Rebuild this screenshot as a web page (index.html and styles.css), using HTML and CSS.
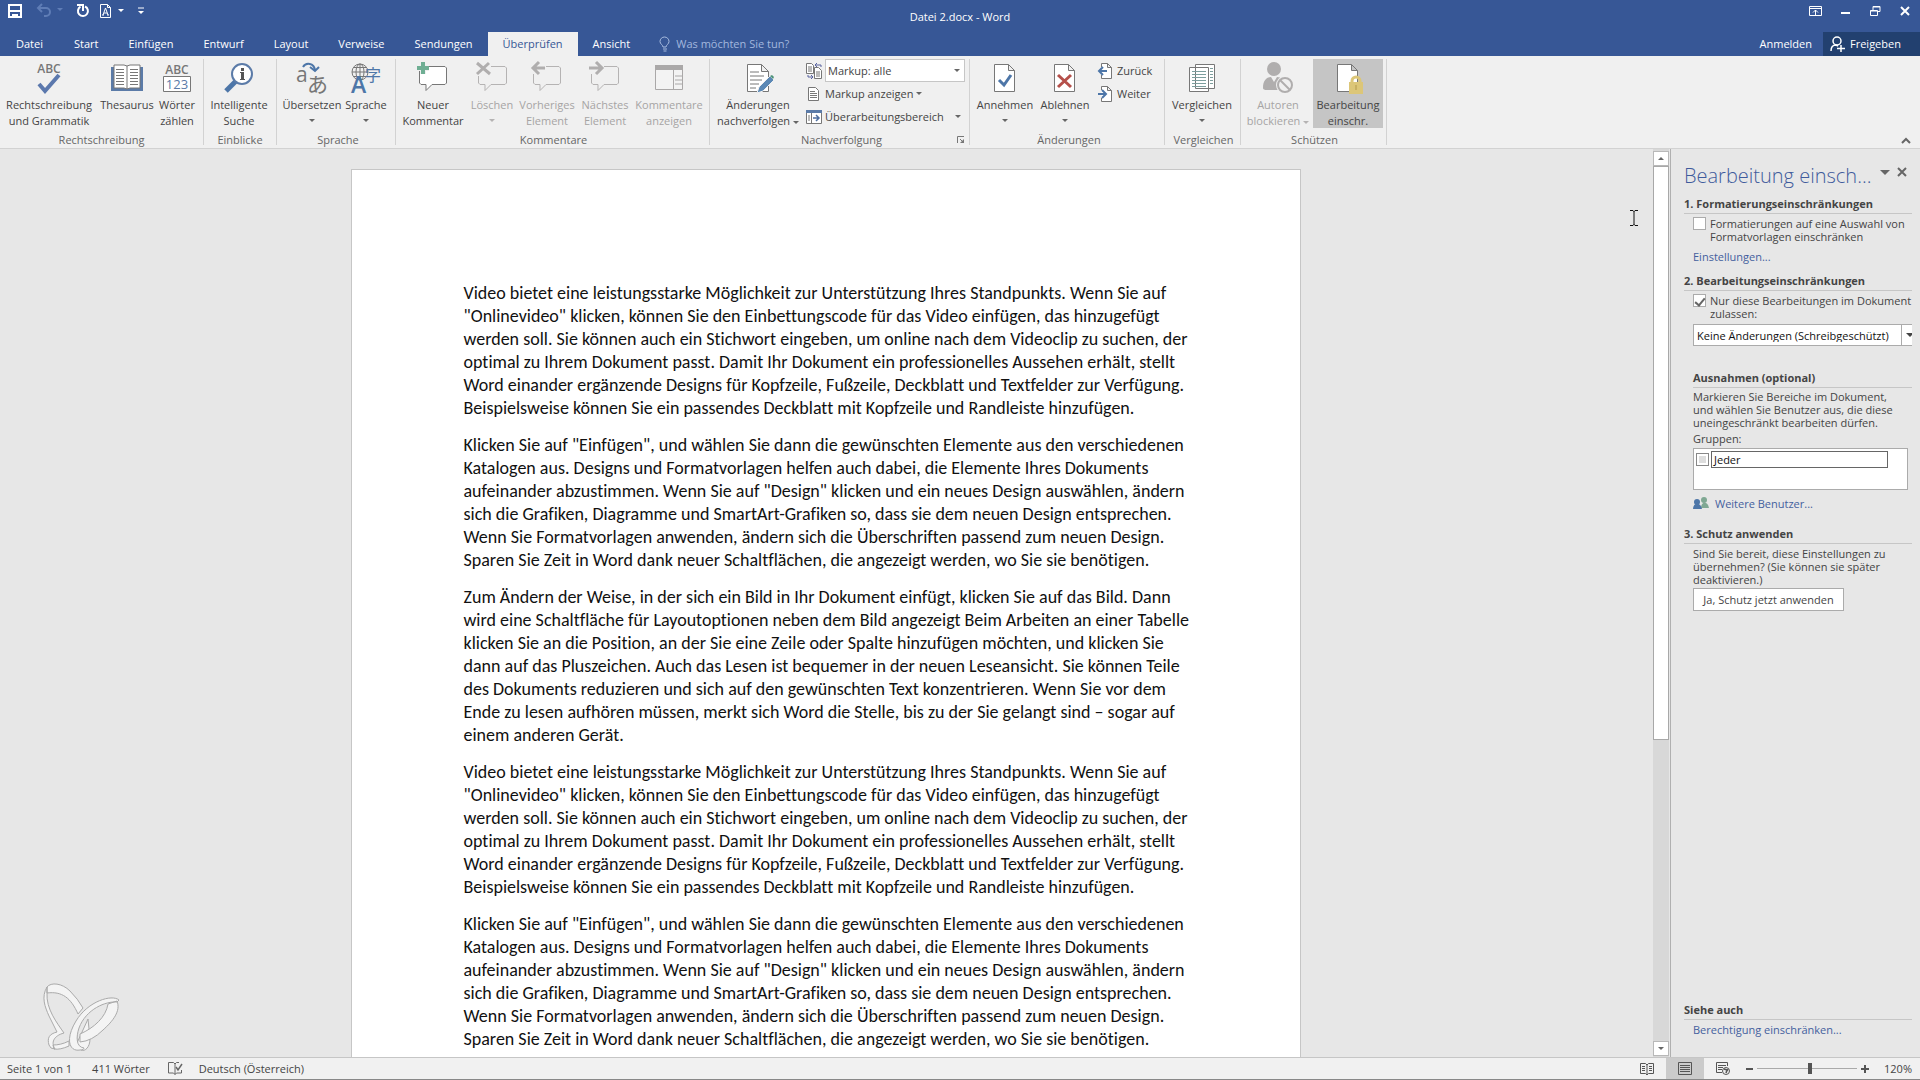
FILE: index.html
```html
<!DOCTYPE html>
<html lang="de">
<head>
<meta charset="utf-8">
<title>Datei 2.docx - Word</title>
<link rel="stylesheet" href="styles.css">
</head>
<body>
<header class="top">
  <div class="titlebar">
    <div class="quick">
      <button class="plain q-save" aria-label="Speichern"><svg width="14" height="14" viewBox="0 0 14 14"><path d="M1 1h12v12H1z" fill="none" stroke="#fff" stroke-width="2"/><path d="M1 7h12" stroke="#fff" stroke-width="2"/><path d="M4 10h6v4H7v-2H6v2H4z" fill="#fff"/></svg></button>
      <button class="plain q-undo" aria-label="Rückgängig"><svg width="26" height="14" viewBox="0 0 26 14"><path d="M1 4h8a4 4 0 0 1 0 8H7M5 0L1 4l4 4" fill="none" stroke="#5f7db6" stroke-width="2"/><path d="M20 4h6l-3 3z" fill="#5f7db6"/></svg></button>
      <button class="plain q-redo" aria-label="Wiederholen"><svg width="14" height="14" viewBox="0 0 14 14"><path d="M9 2.500a5 5 0 1 1-4.500.2" fill="none" stroke="#fff" stroke-width="2"/><path d="M1 1h6v6" fill="none" stroke="#fff" stroke-width="2"/></svg></button>
      <button class="plain q-style" aria-label="Dokument"><svg width="24" height="14" viewBox="0 0 24 14"><path d="M.5.500h7l3 3v10H.5zM7.500.500v3h3" fill="none" stroke="#fff"/><path d="M3 11l2.500-7 2.500 7M4 9h3M2 11h2M7 11h2" fill="none" stroke="#fff"/><path d="M18 5h6l-3 3z" fill="#fff"/></svg></button>
      <button class="plain q-more" aria-label="Anpassen"><svg width="6" height="8" viewBox="0 0 6 8"><path d="M0 1h6" stroke="#fff"/><path d="M0 4h6L3 7z" fill="#fff"/></svg></button>
    </div>
    <h1 class="doc-title">Datei 2.docx - Word</h1>
    <div class="window-buttons">
      <button class="plain" aria-label="Menüband-Anzeige"><svg width="13" height="10" viewBox="0 0 13 10"><path d="M.5.500h12v9H.5zM.5 2.500h12" fill="none" stroke="#fff"/><path d="M6.500 9V4M4 6.500L6.500 4 9 6.500" fill="none" stroke="#fff"/></svg></button>
      <button class="plain" aria-label="Minimieren"><svg width="10" height="10" viewBox="0 0 10 10"><path d="M0 7h9" stroke="#fff" stroke-width="2"/></svg></button>
      <button class="plain" aria-label="Verkleinern"><svg width="11" height="10" viewBox="0 0 11 10"><path d="M.5 4.500h7v5h-7zM.5 5h7M3 4V.500h7v5H8M3 1h7" fill="none" stroke="#fff"/></svg></button>
      <button class="plain" aria-label="Schließen"><svg width="10" height="10" viewBox="0 0 10 10"><path d="M1 1l8 8M9 1L1 9" stroke="#fff" stroke-width="2"/></svg></button>
    </div>
  </div>
  <nav class="tabs">
    <button class="tab file">Datei</button>
    <button class="tab">Start</button>
    <button class="tab">Einfügen</button>
    <button class="tab">Entwurf</button>
    <button class="tab">Layout</button>
    <button class="tab">Verweise</button>
    <button class="tab">Sendungen</button>
    <button class="tab active">Überprüfen</button>
    <button class="tab">Ansicht</button>
    <label class="tell"><svg width="11" height="15" viewBox="0 0 11 15"><path d="M4 10C4 8 1 7 1 4.500a4 4 0 0 1 9 0C10 7 7 8 7 10zM4 12h4M4.500 14h3" fill="none" stroke="#a9bde0"/></svg><input type="text" aria-label="Suche" placeholder="Was möchten Sie tun?"></label>
    <button class="tab login">Anmelden</button>
    <button class="tab share"><svg width="16" height="16" viewBox="0 0 16 16"><circle cx="7" cy="5" r="4" fill="none" stroke="#fff" stroke-width="1.500"/><path d="M1 15c0-4 2-6 5-6l2 1M7 12.500h8M11 9v7" fill="none" stroke="#fff" stroke-width="1.500"/></svg>Freigeben</button>
  </nav>
</header>

<section class="ribbon">
  <div class="group g-spell">
    <div class="tools">
      <button class="tool w98"><svg width="32" height="32" viewBox="0 0 32 32"><text x="16" y="11" text-anchor="middle" class="icon-abc">ABC</text><path d="M6 22l6 7L26 13" fill="none" stroke="#5b78ad" stroke-width="4"/></svg><span>Rechtschreibung<br>und Grammatik</span></button>
      <button class="tool w58"><svg width="32" height="32" viewBox="0 0 32 32"><path d="M0 5h32v24H0z" fill="#5b7ba8"/><path d="M3 3h10l3 1 3-1h10v23H19l-3 1-3-1H3z" fill="#fff" stroke="#777"/><path d="M16 4v23M5 7.500h8M5 10.500h8M5 13.500h8M5 16.500h8M5 19.500h8M5 22.500h8M19 7.500h8M19 10.500h8M19 13.500h8M19 16.500h8M19 19.500h8M19 22.500h8" stroke="#777"/></svg><span>Thesaurus</span></button>
      <button class="tool w42"><svg width="32" height="32" viewBox="0 0 32 32"><text x="16" y="12" text-anchor="middle" class="icon-abc">ABC</text><path d="M2.500 14.500h27v15h-27z" fill="#fff" stroke="#777"/><text x="16" y="27" text-anchor="middle" class="icon-num">123</text></svg><span>Wörter<br>zählen</span></button>
    </div>
    <div class="caption">Rechtschreibung</div>
  </div>
  <div class="group g-insight">
    <div class="tools"><button class="tool w70"><svg width="32" height="32" viewBox="0 0 32 32"><path d="M14 18L3 29" stroke="#4d76a8" stroke-width="5"/><circle cx="19" cy="12" r="10" fill="#fff" stroke="#5b7ba8" stroke-width="2"/><path d="M18 6h3v3h-3zM17 10h4v7h1v1h-5v-1h1v-6h-1z" fill="#555"/></svg><span>Intelligente<br>Suche</span></button></div>
    <div class="caption">Einblicke</div>
  </div>
  <div class="group g-lang">
    <div class="tools">
      <button class="tool w62"><svg width="32" height="32" viewBox="0 0 32 32"><text x="0" y="20" class="icon-a">a</text><text x="11" y="30" class="icon-kana">あ</text><path d="M7 5c3-5 11-4 12 3M14 5l5 4 4-4" fill="none" stroke="#4d76a8" stroke-width="2"/></svg><span>Übersetzen</span><i class="arrow"></i></button>
      <button class="tool w46"><svg width="32" height="32" viewBox="0 0 32 32"><circle cx="10" cy="10" r="8" fill="none" stroke="#777"/><path d="M2 10h16M10 2v16M4 5.500h12M4 14.500h12" stroke="#777"/><ellipse cx="10" cy="10" rx="4" ry="8" fill="none" stroke="#777"/><text x="15" y="19" class="icon-kanji">字</text><text x="1" y="31" class="icon-big">A</text></svg><span>Sprache</span><i class="arrow"></i></button>
    </div>
    <div class="caption">Sprache</div>
  </div>
  <div class="group g-comment">
    <div class="tools">
      <button class="tool w70"><svg width="32" height="32" viewBox="0 0 32 32"><path d="M5 4.500h23l1.500 1.500v15L28 22.500H15l-6 6v-6H4L2.500 21V6z" fill="#fff" stroke="#777"/><path d="M6 0v12M0 6h12" stroke="#f0f0f0" stroke-width="6"/><path d="M6 0v12M0 6h12" stroke="#6fae93" stroke-width="4"/></svg><span>Neuer<br>Kommentar</span></button>
      <button class="tool w48 off"><svg width="32" height="32" viewBox="0 0 32 32"><path d="M15 4.500h14l1.500 1.500v15L29 22.500H15l-6 6v-6H4L2.500 21V14" fill="none" stroke="#b5b3b3"/><path d="M1 1l13 11M13 1L1 12" stroke="#b0aeae" stroke-width="3"/></svg><span>Löschen</span><i class="arrow"></i></button>
      <button class="tool w62 off"><svg width="32" height="32" viewBox="0 0 32 32"><path d="M15 4.500h13l1.500 1.500v15L28 22.500H15l-6 6v-6H4L2.500 21V12" fill="none" stroke="#b5b3b3"/><path d="M14 6H3M8 0L2 6l6 6" fill="none" stroke="#b0aeae" stroke-width="3"/></svg><span>Vorheriges<br>Element</span></button>
      <button class="tool w54 off"><svg width="32" height="32" viewBox="0 0 32 32"><path d="M15 4.500h13l1.500 1.500v15L28 22.500H15l-6 6v-6H4L2.500 21V12" fill="none" stroke="#b5b3b3"/><path d="M0 6h12M7 0l6 6-6 6" fill="none" stroke="#b0aeae" stroke-width="3"/></svg><span>Nächstes<br>Element</span></button>
      <button class="tool w74 off"><svg width="32" height="32" viewBox="0 0 32 32"><path d="M2.500 3.500h27v24h-27z" fill="#f3f3f3" stroke="#aaa8a8"/><path d="M2 3h28v5H2z" fill="#aaa8a8"/><path d="M20.500 8v20" stroke="#aaa8a8"/><path d="M22 14h7M22 18h7M22 22h7" stroke="#aaa8a8"/></svg><span>Kommentare<br>anzeigen</span></button>
    </div>
    <div class="caption">Kommentare</div>
  </div>
  <div class="group g-track">
    <div class="tools">
      <button class="tool w88"><svg width="32" height="32" viewBox="0 0 32 32"><path d="M5.500 2.500h14l7 7v20h-21zM19.500 2.500v7h7" fill="#fff" stroke="#777"/><path d="M8 10h9M8 14h14M8 18h12M8 22h9M8 26h6" stroke="#777"/><path d="M15 31l2-6L28 14l4 4-11 11z" fill="#5b88b5" stroke="#f0f0f0"/><path d="M28 14l2-1 2 2-1 2z" fill="#4e9379"/></svg><span>Änderungen<br>nachverfolgen <i class="arrow inline"></i></span></button>
      <div class="rows">
        <div class="row"><svg width="16" height="16" viewBox="0 0 16 16"><path d="M.5.500h5l2 2v8h-7zM8.500 4.500h4l3 3v8h-7z" fill="#fff" stroke="#777"/><path d="M2 4h4M2 6h4M2 8h4M10 9h4M10 11h4M10 13h4" stroke="#777"/><path d="M15 4V2H9M11 0L9 2l2 2M2 12v2h5M5 12l2 2-2 2" fill="none" stroke="#5863a0"/></svg><span class="pick"><select aria-label="Markup"><option>Markup: alle</option></select><i class="arrow"></i></span></div>
        <button class="row"><svg width="16" height="16" viewBox="0 0 16 16"><path d="M2.500 1.500h7l3 3v10h-10z" fill="#fff" stroke="#777"/><path d="M4 5.500h5M4 7.500h7M4 9.500h7M4 11.500h7" stroke="#777"/></svg>Markup anzeigen<i class="arrow"></i></button>
        <button class="row"><svg width="16" height="16" viewBox="0 0 16 16"><path d="M.5 1.500h15v13H.5z" fill="#fff" stroke="#777"/><path d="M0 1h16v3H0z" fill="#5b7ba8"/><path d="M5.500 4v10" stroke="#777"/><path d="M3 6v6" stroke="#777"/><path d="M7 9h6M10 6l3 3-3 3" fill="none" stroke="#4d6ea0" stroke-width="1.500"/></svg>Überarbeitungsbereich<i class="arrow far"></i></button>
      </div>
    </div>
    <div class="caption">Nachverfolgung</div>
    <button class="plain launcher" aria-label="Optionen"><svg width="8" height="8" viewBox="0 0 8 8"><path d="M.5 7V.500H7M3 3l3 3" fill="none" stroke="#777"/><path d="M7 3v4H3z" fill="#777"/></svg></button>
  </div>
  <div class="group g-change">
    <div class="tools">
      <button class="tool w62"><svg width="32" height="32" viewBox="0 0 32 32"><path d="M5.500 2.500h14l6 6v21h-20zM19.500 2.500v6h6" fill="#fff" stroke="#777"/><path d="M10 18l5 5 7-10" fill="none" stroke="#4d76a8" stroke-width="3"/></svg><span>Annehmen</span><i class="arrow"></i></button>
      <button class="tool w58"><svg width="32" height="32" viewBox="0 0 32 32"><path d="M5.500 2.500h14l6 6v21h-20zM19.500 2.500v6h6" fill="#fff" stroke="#777"/><path d="M9 13l13 12M22 13L9 25" stroke="#b5504a" stroke-width="3"/></svg><span>Ablehnen</span><i class="arrow"></i></button>
      <div class="rows">
        <button class="row"><svg width="16" height="16" viewBox="0 0 16 16"><path d="M3.500 4V.500h6l4 4v11h-10V12M9.500.500v4h4" fill="#fff" stroke="#777"/><path d="M9 8H1M5 4L1 8l4 4" fill="none" stroke="#4d76a8" stroke-width="2"/></svg>Zurück</button>
        <button class="row"><svg width="16" height="16" viewBox="0 0 16 16"><path d="M3.500 4V.500h6l4 4v11h-10V12M9.500.500v4h4" fill="#fff" stroke="#777"/><path d="M0 8h8M4 4l4 4-4 4" fill="none" stroke="#4d76a8" stroke-width="2"/></svg>Weiter</button>
      </div>
    </div>
    <div class="caption">Änderungen</div>
  </div>
  <div class="group g-compare">
    <div class="tools"><button class="tool w70"><svg width="32" height="32" viewBox="0 0 32 32"><path d="M9.500 2.500h19v24h-19zM3.500 5.500h19v24h-19z" fill="#fff" stroke="#777"/><path d="M6 9.500h14M6 12.500h14M6 15.500h14M6 18.500h14M6 21.500h14M6 24.500h14M24 6.500h3M24 9.500h3M24 12.500h3M24 15.500h3M24 18.500h3M24 21.500h3" stroke="#7d9e9d"/></svg><span>Vergleichen</span><i class="arrow"></i></button></div>
    <div class="caption">Vergleichen</div>
  </div>
  <div class="group g-protect">
    <div class="tools">
      <button class="tool w70 off"><svg width="32" height="32" viewBox="0 0 32 32"><circle cx="12" cy="7" r="7" fill="#b0aeae"/><path d="M1 26c0-7 3-11 8-11l3 5 3-5c4 0 6 3 7 8l-7 5H5q-4 0-4-2z" fill="#b0aeae"/><circle cx="23" cy="23" r="9" fill="#f0f0f0"/><circle cx="23" cy="23" r="7" fill="none" stroke="#b0aeae" stroke-width="2"/><path d="M18 18l10 10" stroke="#b0aeae" stroke-width="2"/></svg><span>Autoren<br>blockieren <i class="arrow inline"></i></span></button>
      <button class="tool w70 pressed"><svg width="32" height="32" viewBox="0 0 32 32"><path d="M5.500 2.500h14l6 6v21h-20zM19.500 2.500v6h6" fill="#fff" stroke="#777"/><path d="M20 22v-3a4 4 0 0 1 8 0v3" fill="none" stroke="#dcc678" stroke-width="3"/><path d="M17 20h14v12H17z" fill="#dcc678"/><path d="M24 23v5" stroke="#c7b062" stroke-width="2"/></svg><span>Bearbeitung<br>einschr.</span></button>
    </div>
    <div class="caption">Schützen</div>
  </div>
  <button class="plain collapse" aria-label="Menüband reduzieren"><svg width="10" height="6" viewBox="0 0 10 6"><path d="M1 5l4-4 4 4" fill="none" stroke="#666" stroke-width="2"/></svg></button>
</section>

<main class="work">
  <div class="canvas">
    <article class="page">
      <p>Video bietet eine leistungsstarke Möglichkeit zur Unterstützung Ihres Standpunkts. Wenn Sie auf<br>"Onlinevideo" klicken, können Sie den Einbettungscode für das Video einfügen, das hinzugefügt<br>werden soll. Sie können auch ein Stichwort eingeben, um online nach dem Videoclip zu suchen, der<br>optimal zu Ihrem Dokument passt. Damit Ihr Dokument ein professionelles Aussehen erhält, stellt<br>Word einander ergänzende Designs für Kopfzeile, Fußzeile, Deckblatt und Textfelder zur Verfügung.<br>Beispielsweise können Sie ein passendes Deckblatt mit Kopfzeile und Randleiste hinzufügen.</p>
      <p>Klicken Sie auf "Einfügen", und wählen Sie dann die gewünschten Elemente aus den verschiedenen<br>Katalogen aus. Designs und Formatvorlagen helfen auch dabei, die Elemente Ihres Dokuments<br>aufeinander abzustimmen. Wenn Sie auf "Design" klicken und ein neues Design auswählen, ändern<br>sich die Grafiken, Diagramme und SmartArt-Grafiken so, dass sie dem neuen Design entsprechen.<br>Wenn Sie Formatvorlagen anwenden, ändern sich die Überschriften passend zum neuen Design.<br>Sparen Sie Zeit in Word dank neuer Schaltflächen, die angezeigt werden, wo Sie sie benötigen.</p>
      <p>Zum Ändern der Weise, in der sich ein Bild in Ihr Dokument einfügt, klicken Sie auf das Bild. Dann<br>wird eine Schaltfläche für Layoutoptionen neben dem Bild angezeigt Beim Arbeiten an einer Tabelle<br>klicken Sie an die Position, an der Sie eine Zeile oder Spalte hinzufügen möchten, und klicken Sie<br>dann auf das Pluszeichen. Auch das Lesen ist bequemer in der neuen Leseansicht. Sie können Teile<br>des Dokuments reduzieren und sich auf den gewünschten Text konzentrieren. Wenn Sie vor dem<br>Ende zu lesen aufhören müssen, merkt sich Word die Stelle, bis zu der Sie gelangt sind – sogar auf<br>einem anderen Gerät.</p>
      <p>Video bietet eine leistungsstarke Möglichkeit zur Unterstützung Ihres Standpunkts. Wenn Sie auf<br>"Onlinevideo" klicken, können Sie den Einbettungscode für das Video einfügen, das hinzugefügt<br>werden soll. Sie können auch ein Stichwort eingeben, um online nach dem Videoclip zu suchen, der<br>optimal zu Ihrem Dokument passt. Damit Ihr Dokument ein professionelles Aussehen erhält, stellt<br>Word einander ergänzende Designs für Kopfzeile, Fußzeile, Deckblatt und Textfelder zur Verfügung.<br>Beispielsweise können Sie ein passendes Deckblatt mit Kopfzeile und Randleiste hinzufügen.</p>
      <p>Klicken Sie auf "Einfügen", und wählen Sie dann die gewünschten Elemente aus den verschiedenen<br>Katalogen aus. Designs und Formatvorlagen helfen auch dabei, die Elemente Ihres Dokuments<br>aufeinander abzustimmen. Wenn Sie auf "Design" klicken und ein neues Design auswählen, ändern<br>sich die Grafiken, Diagramme und SmartArt-Grafiken so, dass sie dem neuen Design entsprechen.<br>Wenn Sie Formatvorlagen anwenden, ändern sich die Überschriften passend zum neuen Design.<br>Sparen Sie Zeit in Word dank neuer Schaltflächen, die angezeigt werden, wo Sie sie benötigen.</p>
    </article>
    <svg class="butterfly" width="78" height="70" viewBox="0 0 78 70"><g fill="#f4f4f4" stroke="#aaa" stroke-width="1"><path d="M5 4C9-1 20 0 28 8q8 8 13 17l-5 6C29 15 20 8 5 10zM5 4C-1 14 3 24 7 33l8 16c-8 2-10 6-8 13q1 4 6 4c-4-6-2-13 9-16C15 40 4 26 5 10zM11 62c5 0 10-1 16-4v5q-9 4-15 3z"/><path d="M46 36l2 20c0 8-5 13-9 11l-4-7z"/><path fill-rule="evenodd" d="M77 17C70 11 46 18 34 38c-11 18-7 31 4 29 3 0 4-1 4-2C34 64 34 54 37 45 44 26 64 18 75 19zM75 18c4 10-4 20-14 29Q50 58 38 59l0-8C52 45 64 34 66 21z"/></g></svg>
    <svg class="ibeam" width="8" height="16" viewBox="0 0 8 16"><path d="M0 .5h3l1 1 1-1h3M4 1v14M0 15.500h3l1-1 1 1h3" fill="none" stroke="#111"/></svg>
  </div>
  <div class="scroll">
    <button class="plain stepper" aria-label="Nach oben"><i class="arrow up"></i></button>
    <div class="thumb"></div>
    <div class="track"></div>
    <button class="plain stepper" aria-label="Nach unten"><i class="arrow"></i></button>
  </div>
  <aside class="pane">
    <div class="pane-head"><h2>Bearbeitung einsch...</h2><button class="plain" aria-label="Optionen"><i class="arrow large"></i></button><button class="plain" aria-label="Schließen"><svg width="10" height="10" viewBox="0 0 10 10"><path d="M1 1l8 8M9 1L1 9" stroke="#666" stroke-width="2"/></svg></button></div>
    <section>
      <h3>1. Formatierungseinschränkungen</h3>
      <div class="body">
        <label class="check"><input type="checkbox"><span>Formatierungen auf eine Auswahl von<br>Formatvorlagen einschränken</span></label>
        <a class="settings" href="#">Einstellungen...</a>
      </div>
    </section>
    <section>
      <h3>2. Bearbeitungseinschränkungen</h3>
      <div class="body">
        <label class="check"><input type="checkbox" checked><span>Nur diese Bearbeitungen im Dokument<br>zulassen:</span></label>
        <div class="mode"><select aria-label="Bearbeitungsart"><option>Keine Änderungen (Schreibgeschützt)</option></select><span class="mode-arrow"><i class="arrow"></i></span></div>
        <h3 class="sub">Ausnahmen (optional)</h3>
        <p>Markieren Sie Bereiche im Dokument,<br>und wählen Sie Benutzer aus, die diese<br>uneingeschränkt bearbeiten dürfen.</p>
        <p class="groups-label">Gruppen:</p>
        <div class="groups"><input type="checkbox" id="all"><label for="all">Jeder</label></div>
        <a class="users" href="#"><svg width="16" height="12" viewBox="0 0 16 12"><circle cx="11" cy="3" r="3" fill="#7fa893"/><path d="M8 11c0-7 7-7 8 0z" fill="#7fa893"/><circle cx="4" cy="5" r="3" fill="#4d76a8"/><path d="M0 12c0-7 8-7 9 0z" fill="#4d76a8"/></svg>Weitere Benutzer...</a>
      </div>
    </section>
    <section>
      <h3>3. Schutz anwenden</h3>
      <div class="body">
        <p>Sind Sie bereit, diese Einstellungen zu<br>übernehmen? (Sie können sie später<br>deaktivieren.)</p>
        <button class="apply">Ja, Schutz jetzt anwenden</button>
      </div>
    </section>
    <section class="also">
      <h3>Siehe auch</h3>
      <div class="body"><a href="#">Berechtigung einschränken...</a></div>
    </section>
  </aside>
</main>

<footer class="status">
  <span class="s-page">Seite 1 von 1</span>
  <span class="s-words">411 Wörter</span>
  <svg class="s-proof" width="15" height="13" viewBox="0 0 15 13"><path d="M7 12.500L5.500 11H.5V.500h5L7 2v10.500L8.500 11h5V8M7 2L8.500.500H11" fill="none" stroke="#666"/><path d="M8 5l2 3 4-6" fill="none" stroke="#666" stroke-width="1.500"/></svg>
  <span>Deutsch (Österreich)</span>
  <div class="views">
    <button class="plain view" aria-label="Lesemodus"><svg width="14" height="12" viewBox="0 0 14 12"><path d="M.5.500h5L7 2 8.500.500h5v10h-5L7 12l-1.500-1.500h-5zM7 2v10M2 3.500h3M2 5.500h3M2 7.500h3M9 3.500h3M9 5.500h3M9 7.500h3" fill="none" stroke="#555"/></svg></button>
    <button class="plain view on" aria-label="Seitenlayout"><svg width="14" height="13" viewBox="0 0 14 13"><path d="M.5.500h13v12H.5zM2 3.500h10M2 5.500h10M2 7.500h10M2 9.500h10" fill="none" stroke="#555"/></svg></button>
    <button class="plain view" aria-label="Weblayout"><svg width="14" height="13" viewBox="0 0 14 13"><path d="M6 10.500H.5V.500h11V4M2 3.500h8M2 5.500h5M2 7.500h4" fill="none" stroke="#555"/><circle cx="10" cy="9" r="3.500" fill="#eee" stroke="#555"/><path d="M8 7l3 1-1 3M12 7l-1 2" fill="none" stroke="#555" stroke-width="1.500"/></svg></button>
  </div>
  <button class="plain zoom-step" aria-label="Verkleinern"><svg width="7" height="8" viewBox="0 0 7 8"><path d="M0 4h7" stroke="#555" stroke-width="2"/></svg></button>
  <input class="zoom" type="range" min="10" max="190" value="105" aria-label="Zoom">
  <button class="plain zoom-step" aria-label="Vergrößern"><svg width="8" height="8" viewBox="0 0 8 8"><path d="M0 4h8M4 0v8" stroke="#555" stroke-width="2"/></svg></button>
  <span class="percent">120%</span>
</footer>
</body>
</html>
```
FILE: styles.css
```css
* { box-sizing: border-box; }

body {
  margin: 0;
  height: 100vh;
  display: flex;
  flex-direction: column;
  overflow: hidden;
  background: #e7e7e7;
  color: #444;
  font: 11px/16px "Open Sans", "Noto Sans", sans-serif;
}

button, input, select { font: inherit; color: inherit; }
button { border: 0; padding: 0; background: none; }
h1, h2, h3, p { margin: 0; }
svg { display: block; flex: none; overflow: visible; }
a { color: #44609e; text-decoration: none; }
.plain { display: flex; align-items: center; justify-content: center; }

.arrow {
  display: inline-block;
  flex: none;
  border: 3px solid transparent;
  border-top-color: #666;
  border-bottom: 0;
}
.arrow.up { border-top: 0; border-bottom: 3px solid #666; }
.arrow.large { border-width: 5px 5px 0; }
.arrow.inline { vertical-align: middle; }

/* Title bar and tabs */
.top { background: #375796; color: #fff; }
.titlebar {
  display: grid;
  grid-template-columns: 1fr auto 1fr;
  height: 32px;
}
.quick { display: flex; padding: 4px 0 0 8px; height: 18px; }
.q-undo { margin-left: 15px; }
.q-redo { margin-left: 13px; }
.q-style { margin-left: 10px; }
.q-more { margin-left: 14px; }
.doc-title { font-size: 11px; font-weight: 400; line-height: 34px; }
.window-buttons {
  display: flex;
  justify-content: flex-end;
  gap: 19px;
  height: 22px;
  padding-right: 10px;
}
.tabs { display: flex; height: 24px; }
.tab { padding: 0 15px; color: #fff; white-space: nowrap; }
.tab.file { padding: 0 16px; }
.tab.active { background: #f0f0f0; color: #375796; }
.tell { display: flex; align-items: center; gap: 6px; margin-left: 14px; color: #a9bde0; }
.tell input { width: 160px; padding: 0; border: 0; background: none; }
.tell input::placeholder { color: #a3b8de; }
.tab.login { margin-left: auto; padding: 0 11px; }
.tab.share { display: flex; align-items: center; gap: 4px; width: 97px; padding: 0 7px; background: #22406f; }

/* Ribbon */
.ribbon {
  display: flex;
  height: 93px;
  padding-top: 3px;
  background: #f0f0f0;
  border-bottom: 1px solid #d2d2d2;
  position: relative;
}
.group {
  position: relative;
  display: flex;
  flex-direction: column;
  flex: none;
  height: 86px;
  border-right: 1px solid #d2d2d2;
}
.g-spell { width: 204px; }
.g-insight { width: 73px; }
.g-lang { width: 119px; padding-left: 4px; }
.g-comment { width: 314px; padding-left: 2px; }
.g-track { width: 260px; padding-left: 4px; }
.g-change { width: 195px; padding-left: 4px; }
.g-compare { width: 76px; padding-left: 2px; }
.g-protect { width: 146px; padding-left: 2px; }
.tools { display: flex; flex: none; height: 69px; }
.tool {
  display: flex;
  flex-direction: column;
  align-items: center;
  flex: none;
  padding-top: 3px;
  white-space: nowrap;
}
.tool > span { margin-top: 3px; }
.tool > .arrow { margin-top: 6px; }
.w42 { width: 42px; }
.w46 { width: 46px; }
.w48 { width: 48px; }
.w54 { width: 54px; }
.w58 { width: 58px; }
.w62 { width: 62px; }
.w70 { width: 70px; }
.w74 { width: 74px; }
.w88 { width: 88px; }
.w98 { width: 98px; }
.off { color: #a6a4a4; }
.off .arrow { border-top-color: #b5b3b3; }
.pressed { background: #c5c5c5; }
.caption { margin-top: 4px; text-align: center; color: #666; }
.launcher { position: absolute; right: 4px; bottom: 1px; }
.collapse { position: absolute; right: 9px; bottom: 4px; }
.rows { display: flex; flex-direction: column; flex: 1; }
.row { display: flex; align-items: center; height: 23px; gap: 3px; padding-left: 4px; white-space: nowrap; }
.pick {
  display: flex;
  align-items: center;
  width: 140px;
  height: 23px;
  background: #fff;
  border: 1px solid #c6c6c6;
  padding-right: 4px;
}
.pick select { flex: 1; appearance: none; border: 0; background: none; padding: 0 2px; }
.far { margin-left: auto; margin-right: 8px; }
.icon-abc { font: 600 12px "Open Sans", sans-serif; fill: #777; }
.icon-num { font: 13px "Open Sans", sans-serif; fill: #5b7ba8; }
.icon-a { font: 21px "Open Sans", sans-serif; fill: #777; }
.icon-kana { font: 21px "Noto Sans CJK JP", sans-serif; fill: #777; }
.icon-kanji { font: 16px "Noto Sans CJK JP", sans-serif; fill: #4d76a8; }
.icon-big { font: 600 23px "Open Sans", sans-serif; fill: #4d76a8; }

/* Document */
.work { display: flex; flex: 1; min-height: 0; }
.canvas { position: relative; flex: 1; overflow: hidden; padding: 20px 2px 0 0; }
.page {
  width: 950px;
  min-height: 100%;
  margin: 0 auto;
  padding: 112px;
  background: #fff;
  border: 1px solid #c6c6c6;
  color: #111;
  font: 18px/23px Carlito, Lato, sans-serif;
  font-variant-ligatures: none;
  white-space: nowrap;
}
.page p { margin-bottom: 14px; }
.butterfly { position: absolute; left: 42px; bottom: 4px; }
.ibeam { position: absolute; right: 15px; top: 61px; }

.scroll { display: flex; flex-direction: column; width: 16px; padding: 2px 0 1px; background: #d8d8d8; }
.stepper { height: 15px; background: #fff; border: 1px solid #b8b8b8; }
.thumb { flex: 574; background: #fff; border: 1px solid #a8a8a8; }
.track { flex: 302; }

/* Task pane */
.pane {
  display: flex;
  flex-direction: column;
  flex: none;
  width: 250px;
  margin-left: 1px;
  padding: 13px 8px 21px 13px;
  border-left: 1px solid #b0b0b0;
  line-height: 13px;
  white-space: nowrap;
}
.pane-head { display: flex; gap: 7px; height: 34px; align-items: flex-start; padding-right: 5px; }
.pane-head h2 { flex: 1; min-width: 0; font-size: 20px; font-weight: 300; line-height: 28px; color: #3f5b9c; }
.pane-head button { height: 20px; }
.pane h3 {
  height: 18px;
  font-size: 11px;
  font-weight: 700;
  line-height: 16px;
  border-bottom: 1px solid #c6c6c6;
}
.body { padding: 3px 0 0 9px; }
.check { display: flex; gap: 4px; }
.check input, .groups input {
  appearance: none;
  display: grid;
  place-items: center;
  flex: none;
  width: 13px;
  height: 13px;
  margin: 0;
  background: #fff;
  border: 1px solid #ababab;
}
.check input:checked::before {
  content: "";
  width: 4px;
  height: 8px;
  border: solid #666;
  border-width: 0 2px 2px 0;
  transform: rotate(40deg);
}
.settings { display: block; margin: 7px 0 10px; }
.mode { display: flex; height: 22px; margin-top: 4px; background: #fff; border: 1px solid #ababab; border-right: 0; color: #111; }
.mode select { flex: 1; min-width: 0; appearance: none; border: 0; background: none; padding: 0 3px; }
.mode-arrow { display: flex; align-items: center; width: 11px; padding-left: 4px; border-left: 1px solid #ababab; overflow: hidden; }
.mode-arrow .arrow { border-width: 4px 4px 0; border-top-color: #444; }
.pane .sub { margin: 24px 0 2px; }
.groups-label { margin: 3px 0; }
.groups { display: flex; gap: 2px; width: 215px; height: 42px; padding: 2px; background: #fff; border: 1px solid #ababab; color: #111; }
.groups input { margin-top: 2px; background: #ddd; border-color: #888; box-shadow: inset 0 0 0 2px #fff; }
.groups label { width: 177px; height: 17px; padding-left: 2px; line-height: 15px; border: 1px solid #666; }
.users { display: flex; align-items: center; gap: 6px; height: 14px; margin: 6px 0 16px; }
.apply { display: block; width: 151px; height: 23px; margin-top: 2px; background: #fff; border: 1px solid #ababab; }
.also { margin-top: auto; }

/* Status bar */
.status {
  display: flex;
  align-items: center;
  height: 23px;
  padding: 0 8px 0 7px;
  background: #f1f1f1;
  border-top: 1px solid #c6c6c6;
  border-bottom: 1px solid #888;
}
.s-words { margin-left: 20px; }
.s-proof { margin: 0 16px 0 18px; }
.views { display: flex; align-self: stretch; margin-left: auto; }
.view { width: 38px; }
.view.on { background: #cbcbcb; }
.zoom-step { margin: 0 4px; }
.zoom { appearance: none; width: 100px; height: 12px; margin: 0; background: linear-gradient(#aaa, #aaa) center / 100% 1px no-repeat; }
.zoom::-webkit-slider-thumb { appearance: none; width: 4px; height: 11px; background: #555; }
.percent { width: 28px; margin-left: 11px; text-align: right; }
```
